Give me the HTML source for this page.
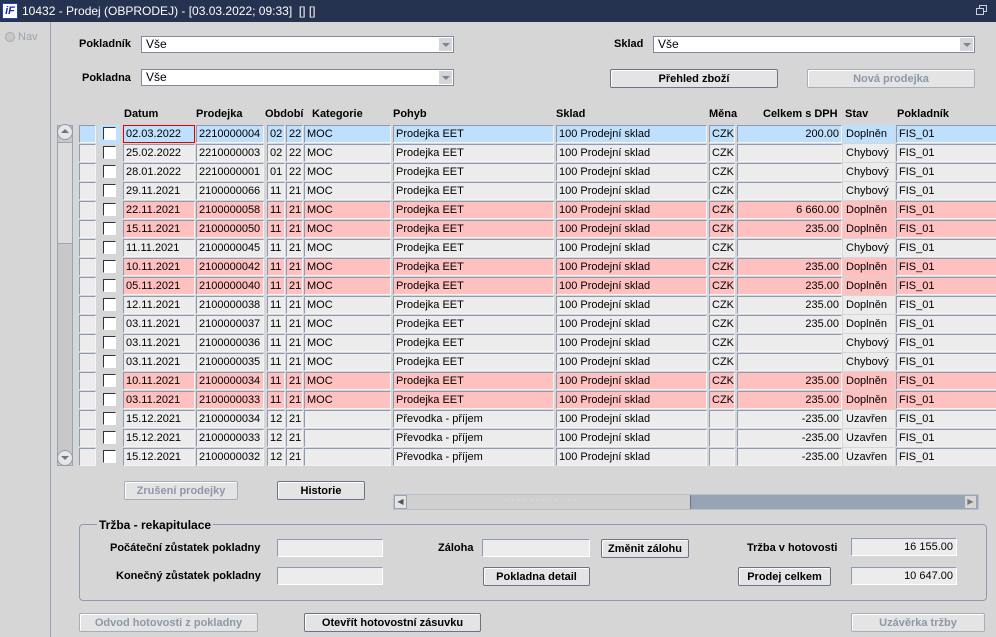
<!DOCTYPE html>
<html><head><meta charset="utf-8"><style>
*{box-sizing:border-box;margin:0;padding:0}
body{width:996px;height:637px;background:#d6d6d6;font-family:"Liberation Sans",Arial,sans-serif;font-size:11px;color:#000;position:relative;overflow:hidden}
.a{position:absolute}
.title{left:0;top:0;width:996px;height:22px;background:#253350;color:#fff;font-size:12px;line-height:22px;padding-left:22px}
.logo{left:2px;top:3px;width:16px;height:16px;background:#fff;border:1px solid #2040c0;color:#1a2fa8;font:bold italic 11px/14px "Liberation Sans",sans-serif;text-align:center}
.nav{left:0;top:22px;width:51px;height:615px;border-right:1px solid #9aa4b4;background:#d6d6d6}
.lbl{font-weight:bold;font-size:11px}
.combo{background:#fff;border:1px solid #7f8a9c;height:17px;line-height:15px;padding-left:4px;font-size:12px}
.combo i{position:absolute;right:1px;top:1px;width:13px;height:13px;background:#d6d6d6}
.combo i:after{content:"";position:absolute;left:3px;top:5px;border-left:4px solid transparent;border-right:4px solid transparent;border-top:4px solid #7a8595}
.btn{border:1px solid #6b7486;border-radius:2px;background:#e4e4e4;font-weight:bold;font-size:11px;text-align:center;line-height:18px;height:19px;box-shadow:inset 1px 1px 0 #fff}
.dis{color:#8e97a8;border-color:#a6aebb}
.hd{top:108px;font-weight:bold;font-size:11px}
.c{position:absolute;top:0;height:18px;border:1px solid #8e9ab0;border-right-color:#f4f4f4;border-bottom-color:#f4f4f4;line-height:17px;padding:0 2px;white-space:nowrap;overflow:hidden;font-size:11px}
.r{position:absolute;left:0;width:996px;height:19px}
.b .c{background:#bfe0fc}.g .c{background:#ececec}.p .c{background:#ffc0c0}
.r .m{left:79px;width:17px;background:#ececec!important}
.b .m{background:#bfe0fc!important}
.r .k{left:103px;width:13px;height:13px;top:2px;background:#fff!important;border-color:#2a3346 #fff #fff #2a3346}
.d{left:123px;width:72px}.e{left:196px;width:68px}.o1{left:267px;width:18px}.o2{left:286px;width:17px}
.ka{left:304px;width:87px}.po{left:393px;width:161px}.sk{left:556px;width:151px}.me{left:709px;width:26px}
.ce{left:737px;width:105px;text-align:right}.st{left:843px;width:52px;border-color:transparent!important}.pk{left:896px;width:100px;border-right:none!important}
.fld{background:#ececec;border:1px solid #8e9ab0;border-right-color:#fff;border-bottom-color:#fff;height:18px;text-align:right;padding-right:3px;line-height:17px}
</style></head><body>
<div class="a title">10432 - Prodej (OBPRODEJ) - [03.03.2022; 09:33]&nbsp; [] []</div>
<div class="a logo">iF</div>
<div class="a" style="left:979px;top:5px;width:8px;height:7px;border:1px solid #ccd"></div>
<div class="a" style="left:976px;top:8px;width:8px;height:7px;border:1px solid #ccd;background:#253350"></div>
<div class="a nav"></div>
<div class="a" style="left:5px;top:32px;width:10px;height:10px;border-radius:50%;background:#c8c8c8;border:1px solid #aaa"></div>
<div class="a" style="left:18px;top:31px;color:#9aa2b0;font-size:11px">Nav</div>

<div class="a lbl" style="left:79px;top:38px">Pokladník</div>
<div class="a combo" style="left:141px;top:36px;width:313px">Vše<i></i></div>
<div class="a lbl" style="left:82px;top:72px">Pokladna</div>
<div class="a combo" style="left:141px;top:69px;width:313px">Vše<i></i></div>
<div class="a lbl" style="left:614px;top:38px">Sklad</div>
<div class="a combo" style="left:653px;top:36px;width:322px">Vše<i></i></div>
<div class="a btn" style="left:610px;top:69px;width:168px">Přehled zboží</div>
<div class="a btn dis" style="left:807px;top:69px;width:168px">Nová prodejka</div>

<div class="a hd" style="left:124px">Datum</div>
<div class="a hd" style="left:196px">Prodejka</div>
<div class="a hd" style="left:265px">Období</div>
<div class="a hd" style="left:312px">Kategorie</div>
<div class="a hd" style="left:393px">Pohyb</div>
<div class="a hd" style="left:556px">Sklad</div>
<div class="a hd" style="left:709px">Měna</div>
<div class="a hd" style="left:763px">Celkem s DPH</div>
<div class="a hd" style="left:845px">Stav</div>
<div class="a hd" style="left:897px">Pokladník</div>

<div class="a" style="left:57px;top:125px;width:16px;height:341px;background:#c8c8c8;border:1px solid #9aa4b4"></div>
<div class="a" style="left:57px;top:142px;width:16px;height:102px;background:#dcdcdc;border:1px solid #9aa4b4"></div>
<div class="a" style="left:57px;top:124px;width:16px;height:16px;border-radius:50%;background:#e6e6e6;border:1px solid #8e98a8"></div>
<div class="a" style="left:61px;top:129px;border-left:4px solid transparent;border-right:4px solid transparent;border-bottom:4px solid #6a7486"></div>
<div class="a" style="left:57px;top:450px;width:16px;height:16px;border-radius:50%;background:#e6e6e6;border:1px solid #8e98a8"></div>
<div class="a" style="left:61px;top:456px;border-left:4px solid transparent;border-right:4px solid transparent;border-top:4px solid #6a7486"></div>

<div class="r b" style="top:125px"><div class="c m"></div><div class="a" style="left:99px;top:0;width:21px;height:19px;background:#bfe0fc"></div><div class="c k"></div><div class="c d" style="border:1px solid #e00000">02.03.2022</div><div class="c e">2210000004</div><div class="c o1">02</div><div class="c o2">22</div><div class="c ka">MOC</div><div class="c po">Prodejka EET</div><div class="c sk">100 Prodejní sklad</div><div class="c me">CZK</div><div class="c ce">200.00</div><div class="c st">Doplněn</div><div class="c pk">FIS_01</div></div>
<div class="r g" style="top:144px"><div class="c m"></div><div class="c k"></div><div class="c d">25.02.2022</div><div class="c e">2210000003</div><div class="c o1">02</div><div class="c o2">22</div><div class="c ka">MOC</div><div class="c po">Prodejka EET</div><div class="c sk">100 Prodejní sklad</div><div class="c me">CZK</div><div class="c ce"></div><div class="c st">Chybový</div><div class="c pk">FIS_01</div></div>
<div class="r g" style="top:163px"><div class="c m"></div><div class="c k"></div><div class="c d">28.01.2022</div><div class="c e">2210000001</div><div class="c o1">01</div><div class="c o2">22</div><div class="c ka">MOC</div><div class="c po">Prodejka EET</div><div class="c sk">100 Prodejní sklad</div><div class="c me">CZK</div><div class="c ce"></div><div class="c st">Chybový</div><div class="c pk">FIS_01</div></div>
<div class="r g" style="top:182px"><div class="c m"></div><div class="c k"></div><div class="c d">29.11.2021</div><div class="c e">2100000066</div><div class="c o1">11</div><div class="c o2">21</div><div class="c ka">MOC</div><div class="c po">Prodejka EET</div><div class="c sk">100 Prodejní sklad</div><div class="c me">CZK</div><div class="c ce"></div><div class="c st">Chybový</div><div class="c pk">FIS_01</div></div>
<div class="r p" style="top:201px"><div class="c m"></div><div class="c k"></div><div class="c d">22.11.2021</div><div class="c e">2100000058</div><div class="c o1">11</div><div class="c o2">21</div><div class="c ka">MOC</div><div class="c po">Prodejka EET</div><div class="c sk">100 Prodejní sklad</div><div class="c me">CZK</div><div class="c ce">6 660.00</div><div class="c st">Doplněn</div><div class="c pk">FIS_01</div></div>
<div class="r p" style="top:220px"><div class="c m"></div><div class="c k"></div><div class="c d">15.11.2021</div><div class="c e">2100000050</div><div class="c o1">11</div><div class="c o2">21</div><div class="c ka">MOC</div><div class="c po">Prodejka EET</div><div class="c sk">100 Prodejní sklad</div><div class="c me">CZK</div><div class="c ce">235.00</div><div class="c st">Doplněn</div><div class="c pk">FIS_01</div></div>
<div class="r g" style="top:239px"><div class="c m"></div><div class="c k"></div><div class="c d">11.11.2021</div><div class="c e">2100000045</div><div class="c o1">11</div><div class="c o2">21</div><div class="c ka">MOC</div><div class="c po">Prodejka EET</div><div class="c sk">100 Prodejní sklad</div><div class="c me">CZK</div><div class="c ce"></div><div class="c st">Chybový</div><div class="c pk">FIS_01</div></div>
<div class="r p" style="top:258px"><div class="c m"></div><div class="c k"></div><div class="c d">10.11.2021</div><div class="c e">2100000042</div><div class="c o1">11</div><div class="c o2">21</div><div class="c ka">MOC</div><div class="c po">Prodejka EET</div><div class="c sk">100 Prodejní sklad</div><div class="c me">CZK</div><div class="c ce">235.00</div><div class="c st">Doplněn</div><div class="c pk">FIS_01</div></div>
<div class="r p" style="top:277px"><div class="c m"></div><div class="c k"></div><div class="c d">05.11.2021</div><div class="c e">2100000040</div><div class="c o1">11</div><div class="c o2">21</div><div class="c ka">MOC</div><div class="c po">Prodejka EET</div><div class="c sk">100 Prodejní sklad</div><div class="c me">CZK</div><div class="c ce">235.00</div><div class="c st">Doplněn</div><div class="c pk">FIS_01</div></div>
<div class="r g" style="top:296px"><div class="c m"></div><div class="c k"></div><div class="c d">12.11.2021</div><div class="c e">2100000038</div><div class="c o1">11</div><div class="c o2">21</div><div class="c ka">MOC</div><div class="c po">Prodejka EET</div><div class="c sk">100 Prodejní sklad</div><div class="c me">CZK</div><div class="c ce">235.00</div><div class="c st">Doplněn</div><div class="c pk">FIS_01</div></div>
<div class="r g" style="top:315px"><div class="c m"></div><div class="c k"></div><div class="c d">03.11.2021</div><div class="c e">2100000037</div><div class="c o1">11</div><div class="c o2">21</div><div class="c ka">MOC</div><div class="c po">Prodejka EET</div><div class="c sk">100 Prodejní sklad</div><div class="c me">CZK</div><div class="c ce">235.00</div><div class="c st">Doplněn</div><div class="c pk">FIS_01</div></div>
<div class="r g" style="top:334px"><div class="c m"></div><div class="c k"></div><div class="c d">03.11.2021</div><div class="c e">2100000036</div><div class="c o1">11</div><div class="c o2">21</div><div class="c ka">MOC</div><div class="c po">Prodejka EET</div><div class="c sk">100 Prodejní sklad</div><div class="c me">CZK</div><div class="c ce"></div><div class="c st">Chybový</div><div class="c pk">FIS_01</div></div>
<div class="r g" style="top:353px"><div class="c m"></div><div class="c k"></div><div class="c d">03.11.2021</div><div class="c e">2100000035</div><div class="c o1">11</div><div class="c o2">21</div><div class="c ka">MOC</div><div class="c po">Prodejka EET</div><div class="c sk">100 Prodejní sklad</div><div class="c me">CZK</div><div class="c ce"></div><div class="c st">Chybový</div><div class="c pk">FIS_01</div></div>
<div class="r p" style="top:372px"><div class="c m"></div><div class="c k"></div><div class="c d">10.11.2021</div><div class="c e">2100000034</div><div class="c o1">11</div><div class="c o2">21</div><div class="c ka">MOC</div><div class="c po">Prodejka EET</div><div class="c sk">100 Prodejní sklad</div><div class="c me">CZK</div><div class="c ce">235.00</div><div class="c st">Doplněn</div><div class="c pk">FIS_01</div></div>
<div class="r p" style="top:391px"><div class="c m"></div><div class="c k"></div><div class="c d">03.11.2021</div><div class="c e">2100000033</div><div class="c o1">11</div><div class="c o2">21</div><div class="c ka">MOC</div><div class="c po">Prodejka EET</div><div class="c sk">100 Prodejní sklad</div><div class="c me">CZK</div><div class="c ce">235.00</div><div class="c st">Doplněn</div><div class="c pk">FIS_01</div></div>
<div class="r g" style="top:410px"><div class="c m"></div><div class="c k"></div><div class="c d">15.12.2021</div><div class="c e">2100000034</div><div class="c o1">12</div><div class="c o2">21</div><div class="c ka"></div><div class="c po">Převodka - příjem</div><div class="c sk">100 Prodejní sklad</div><div class="c me"></div><div class="c ce">-235.00</div><div class="c st">Uzavřen</div><div class="c pk">FIS_01</div></div>
<div class="r g" style="top:429px"><div class="c m"></div><div class="c k"></div><div class="c d">15.12.2021</div><div class="c e">2100000033</div><div class="c o1">12</div><div class="c o2">21</div><div class="c ka"></div><div class="c po">Převodka - příjem</div><div class="c sk">100 Prodejní sklad</div><div class="c me"></div><div class="c ce">-235.00</div><div class="c st">Uzavřen</div><div class="c pk">FIS_01</div></div>
<div class="r g" style="top:448px"><div class="c m"></div><div class="c k"></div><div class="c d">15.12.2021</div><div class="c e">2100000032</div><div class="c o1">12</div><div class="c o2">21</div><div class="c ka"></div><div class="c po">Převodka - příjem</div><div class="c sk">100 Prodejní sklad</div><div class="c me"></div><div class="c ce">-235.00</div><div class="c st">Uzavřen</div><div class="c pk">FIS_01</div></div>

<div class="a btn dis" style="left:124px;top:481px;width:114px">Zrušení prodejky</div>
<div class="a btn" style="left:277px;top:481px;width:88px">Historie</div>

<div class="a" style="left:393px;top:494px;width:586px;height:16px;background:#97a4b6;border:1px solid #b8c0cc"></div>
<div class="a" style="left:394px;top:495px;width:297px;height:14px;background:#d0d0d0;border-right:1px solid #6b7486"></div>
<div class="a" style="left:394px;top:495px;width:13px;height:14px;background:#e4e4e4;border:1px solid #9aa4b4;font-size:8px;line-height:12px;text-align:center;color:#555">◀</div>
<div class="a" style="left:964px;top:495px;width:13px;height:14px;background:#d6d6d6;border:1px solid #9aa4b4;font-size:8px;line-height:12px;text-align:center;color:#777">▶</div>
<div class="a" style="left:505px;top:497px;color:#fff;font-size:7px;letter-spacing:1px">· · · · · · · · · · · ·</div>

<div class="a" style="left:79px;top:524px;width:908px;height:77px;border:1px solid #8e9ab0;border-radius:4px"></div>
<div class="a lbl" style="left:97px;top:518px;background:#d6d6d6;padding:0 2px;font-size:12px">Tržba - rekapitulace</div>
<div class="a lbl" style="left:110px;top:542px">Počáteční zůstatek pokladny</div>
<div class="a fld" style="left:277px;top:539px;width:106px"></div>
<div class="a lbl" style="left:116px;top:570px">Konečný zůstatek pokladny</div>
<div class="a fld" style="left:277px;top:567px;width:106px"></div>
<div class="a lbl" style="left:438px;top:542px">Záloha</div>
<div class="a fld" style="left:482px;top:539px;width:108px"></div>
<div class="a btn" style="left:601px;top:539px;width:88px">Změnit zálohu</div>
<div class="a btn" style="left:483px;top:567px;width:107px">Pokladna detail</div>
<div class="a lbl" style="left:747px;top:542px">Tržba v hotovosti</div>
<div class="a fld" style="left:851px;top:538px;width:106px">16 155.00</div>
<div class="a btn" style="left:738px;top:567px;width:93px">Prodej celkem</div>
<div class="a fld" style="left:851px;top:567px;width:106px">10 647.00</div>

<div class="a btn dis" style="left:79px;top:613px;width:179px">Odvod hotovosti z pokladny</div>
<div class="a btn" style="left:304px;top:613px;width:177px">Otevřít hotovostní zásuvku</div>
<div class="a btn dis" style="left:851px;top:613px;width:134px">Uzávěrka tržby</div>
</body></html>
